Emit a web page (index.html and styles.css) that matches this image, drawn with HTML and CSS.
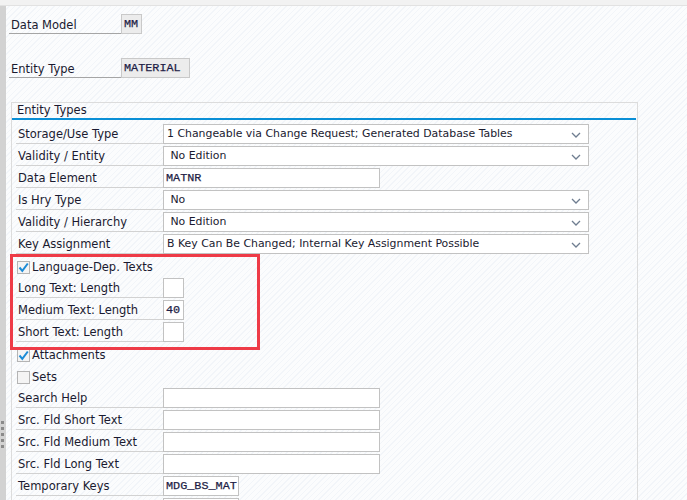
FILE: index.html
```html
<!DOCTYPE html>
<html>
<head>
<meta charset="utf-8">
<link rel="stylesheet" href="styles.css">
</head>
<body>
<div class="topstrip"></div>
<div class="page">
  <div class="sidebar">
    <div class="grip"><span></span><span></span><span></span><span></span><span></span></div>
  </div>
  <div class="content">
    <div class="hdr-row first">
      <div class="hdr-label">Data Model</div>
      <div class="hdr-value w-mm">MM</div>
    </div>
    <div class="hdr-row">
      <div class="hdr-label">Entity Type</div>
      <div class="hdr-value w-mat">MATERIAL</div>
    </div>

    <div class="frame">
      <div class="frame-title">Entity Types</div>
      <div class="frame-line"></div>
      <div class="rows">
        <div class="row"><div class="lbl">Storage/Use Type</div><div class="field dd">1 Changeable via Change Request; Generated Database Tables<svg class="chev" width="10" height="6" viewBox="0 0 10 6"><polyline points="1,1 5,5 9,1" fill="none" stroke="#6f7d90" stroke-width="1.3"/></svg></div></div>
        <div class="row"><div class="lbl">Validity / Entity</div><div class="field dd">&nbsp;No Edition<svg class="chev" width="10" height="6" viewBox="0 0 10 6"><polyline points="1,1 5,5 9,1" fill="none" stroke="#6f7d90" stroke-width="1.3"/></svg></div></div>
        <div class="row"><div class="lbl">Data Element</div><div class="field mono w-217">MATNR</div></div>
        <div class="row"><div class="lbl">Is Hry Type</div><div class="field dd">&nbsp;No<svg class="chev" width="10" height="6" viewBox="0 0 10 6"><polyline points="1,1 5,5 9,1" fill="none" stroke="#6f7d90" stroke-width="1.3"/></svg></div></div>
        <div class="row"><div class="lbl">Validity / Hierarchy</div><div class="field dd">&nbsp;No Edition<svg class="chev" width="10" height="6" viewBox="0 0 10 6"><polyline points="1,1 5,5 9,1" fill="none" stroke="#6f7d90" stroke-width="1.3"/></svg></div></div>
        <div class="row"><div class="lbl">Key Assignment</div><div class="field dd">B Key Can Be Changed; Internal Key Assignment Possible<svg class="chev" width="10" height="6" viewBox="0 0 10 6"><polyline points="1,1 5,5 9,1" fill="none" stroke="#6f7d90" stroke-width="1.3"/></svg></div></div>
        <div class="row"><div class="chk-row"><span class="cb"><svg width="11" height="11" viewBox="0 0 11 11"><polyline points="1.5,5.5 4.3,8.8 9.8,1.5" fill="none" stroke="#1b8bd6" stroke-width="2"/></svg></span>Language-Dep. Texts</div></div>
        <div class="row"><div class="lbl">Long Text: Length</div><div class="field mono w-21"></div></div>
        <div class="row"><div class="lbl">Medium Text: Length</div><div class="field mono w-21">40</div></div>
        <div class="row"><div class="lbl">Short Text: Length</div><div class="field mono w-21"></div></div>
        <div class="row"><div class="chk-row"><span class="cb"><svg width="11" height="11" viewBox="0 0 11 11"><polyline points="1.5,5.5 4.3,8.8 9.8,1.5" fill="none" stroke="#1b8bd6" stroke-width="2"/></svg></span>Attachments</div></div>
        <div class="row"><div class="chk-row"><span class="cb"></span>Sets</div></div>
        <div class="row"><div class="lbl">Search Help</div><div class="field mono w-217"></div></div>
        <div class="row"><div class="lbl">Src. Fld Short Text</div><div class="field mono w-217"></div></div>
        <div class="row"><div class="lbl">Src. Fld Medium Text</div><div class="field mono w-217"></div></div>
        <div class="row"><div class="lbl">Src. Fld Long Text</div><div class="field mono w-217"></div></div>
        <div class="row"><div class="lbl">Temporary Keys</div><div class="field mono w-76">MDG_BS_MAT</div></div>
        <div class="row"><div class="lbl"></div><div class="field mono w-76"></div></div>
      </div>
    </div>
  </div>
  <div class="highlight"></div>
</div>
</body>
</html>
```

FILE: styles.css
```css
html, body {
  margin: 0;
  padding: 0;
  height: 100%;
  overflow: hidden;
}
body {
  font-family: "DejaVu Sans", "Liberation Sans", sans-serif;
  font-size: 11px;
  color: #1a1a30;
  background-color: #fbfcfd;
  background-image: repeating-linear-gradient(-45deg, #f2f5f9 0 1px, transparent 1px 4px);
}
.topstrip {
  height: 5px;
  background: #f2f2f2;
  border-bottom: 1px solid #e2e2e2;
}
.page {
  position: relative;
  display: flex;
  height: 494px;
}
.sidebar {
  width: 6px;
  background: #d2d2d2;
  position: relative;
  flex: none;
}
.grip {
  position: absolute;
  left: 1px;
  top: 415px;
  display: flex;
  flex-direction: column;
  gap: 3px;
}
.grip span {
  display: block;
  width: 3px;
  height: 3px;
  background: #8a8a8a;
}
.content {
  flex: 1;
  padding-left: 3px;
}
.hdr-row {
  display: flex;
  margin-top: 24px;
  height: 20px;
}
.hdr-row.first {
  margin-top: 8px;
}
.hdr-label {
  width: 110px;
  padding-left: 2px;
  height: 18px;
  padding-top: 1px;
  line-height: 20px;
  border-bottom: 1px solid #a5a5a5;
  font-size: 11.5px;
}
.hdr-value {
  box-sizing: border-box;
  height: 20px;
  background: #ececec;
  border: 1px solid #c9c9c9;
  font-family: "Liberation Mono", monospace;
  font-size: 11.8px;
  line-height: 18px;
  padding-left: 2px;
  color: #1e1e46;
  -webkit-text-stroke: 0.25px #1e1e46;
}
.w-mm { width: 21px; }
.w-mat { width: 69px; }

.frame {
  margin-top: 24px;
  margin-left: 2px;
  width: 625px;
  height: 420px;
  border: 1px solid #dcdcdc;
  border-bottom: none;
}
.frame-title {
  height: 15px;
  line-height: 15px;
  padding-left: 5px;
  font-size: 11.5px;
}
.frame-line {
  height: 2px;
  background: #0a8fd6;
  margin-right: 1px;
}
.rows {
  display: flex;
  flex-direction: column;
  gap: 2px;
  padding-top: 4px;
  padding-left: 4px;
}
.row {
  display: flex;
  height: 20px;
}
.lbl {
  box-sizing: border-box;
  width: 147px;
  height: 20px;
  padding-left: 2px;
  padding-top: 1px;
  line-height: 19px;
  border-bottom: 1px solid #d2d2d2;
  font-size: 11.5px;
  white-space: nowrap;
}
.field {
  box-sizing: border-box;
  height: 20px;
  background: #fff;
  border: 1px solid #c2c2c2;
  line-height: 18px;
  white-space: nowrap;
}
.dd {
  position: relative;
  width: 426px;
  padding-left: 3px;
  font-size: 10.9px;
}
.chev {
  position: absolute;
  right: 7px;
  top: 7px;
}
.mono {
  font-family: "Liberation Mono", monospace;
  font-size: 11.8px;
  color: #1e1e46;
  -webkit-text-stroke: 0.25px #1e1e46;
  padding-left: 2px;
}
.w-217 { width: 217px; }
.w-21 { width: 21px; }
.w-76 { width: 76px; }
.chk-row {
  display: flex;
  align-items: center;
  padding-left: 1px;
  font-size: 11.5px;
  height: 20px;
  padding-top: 2px;
  box-sizing: border-box;
}
.cb {
  box-sizing: border-box;
  width: 13px;
  height: 13px;
  border: 1px solid #b4b4b4;
  background: #f4f4f4;
  margin-right: 2px;
  display: flex;
  align-items: center;
  justify-content: center;
}
.highlight {
  position: absolute;
  left: 10px;
  top: 248px;
  width: 244px;
  height: 90px;
  border: 3px solid #ee3b47;
  pointer-events: none;
}
```
